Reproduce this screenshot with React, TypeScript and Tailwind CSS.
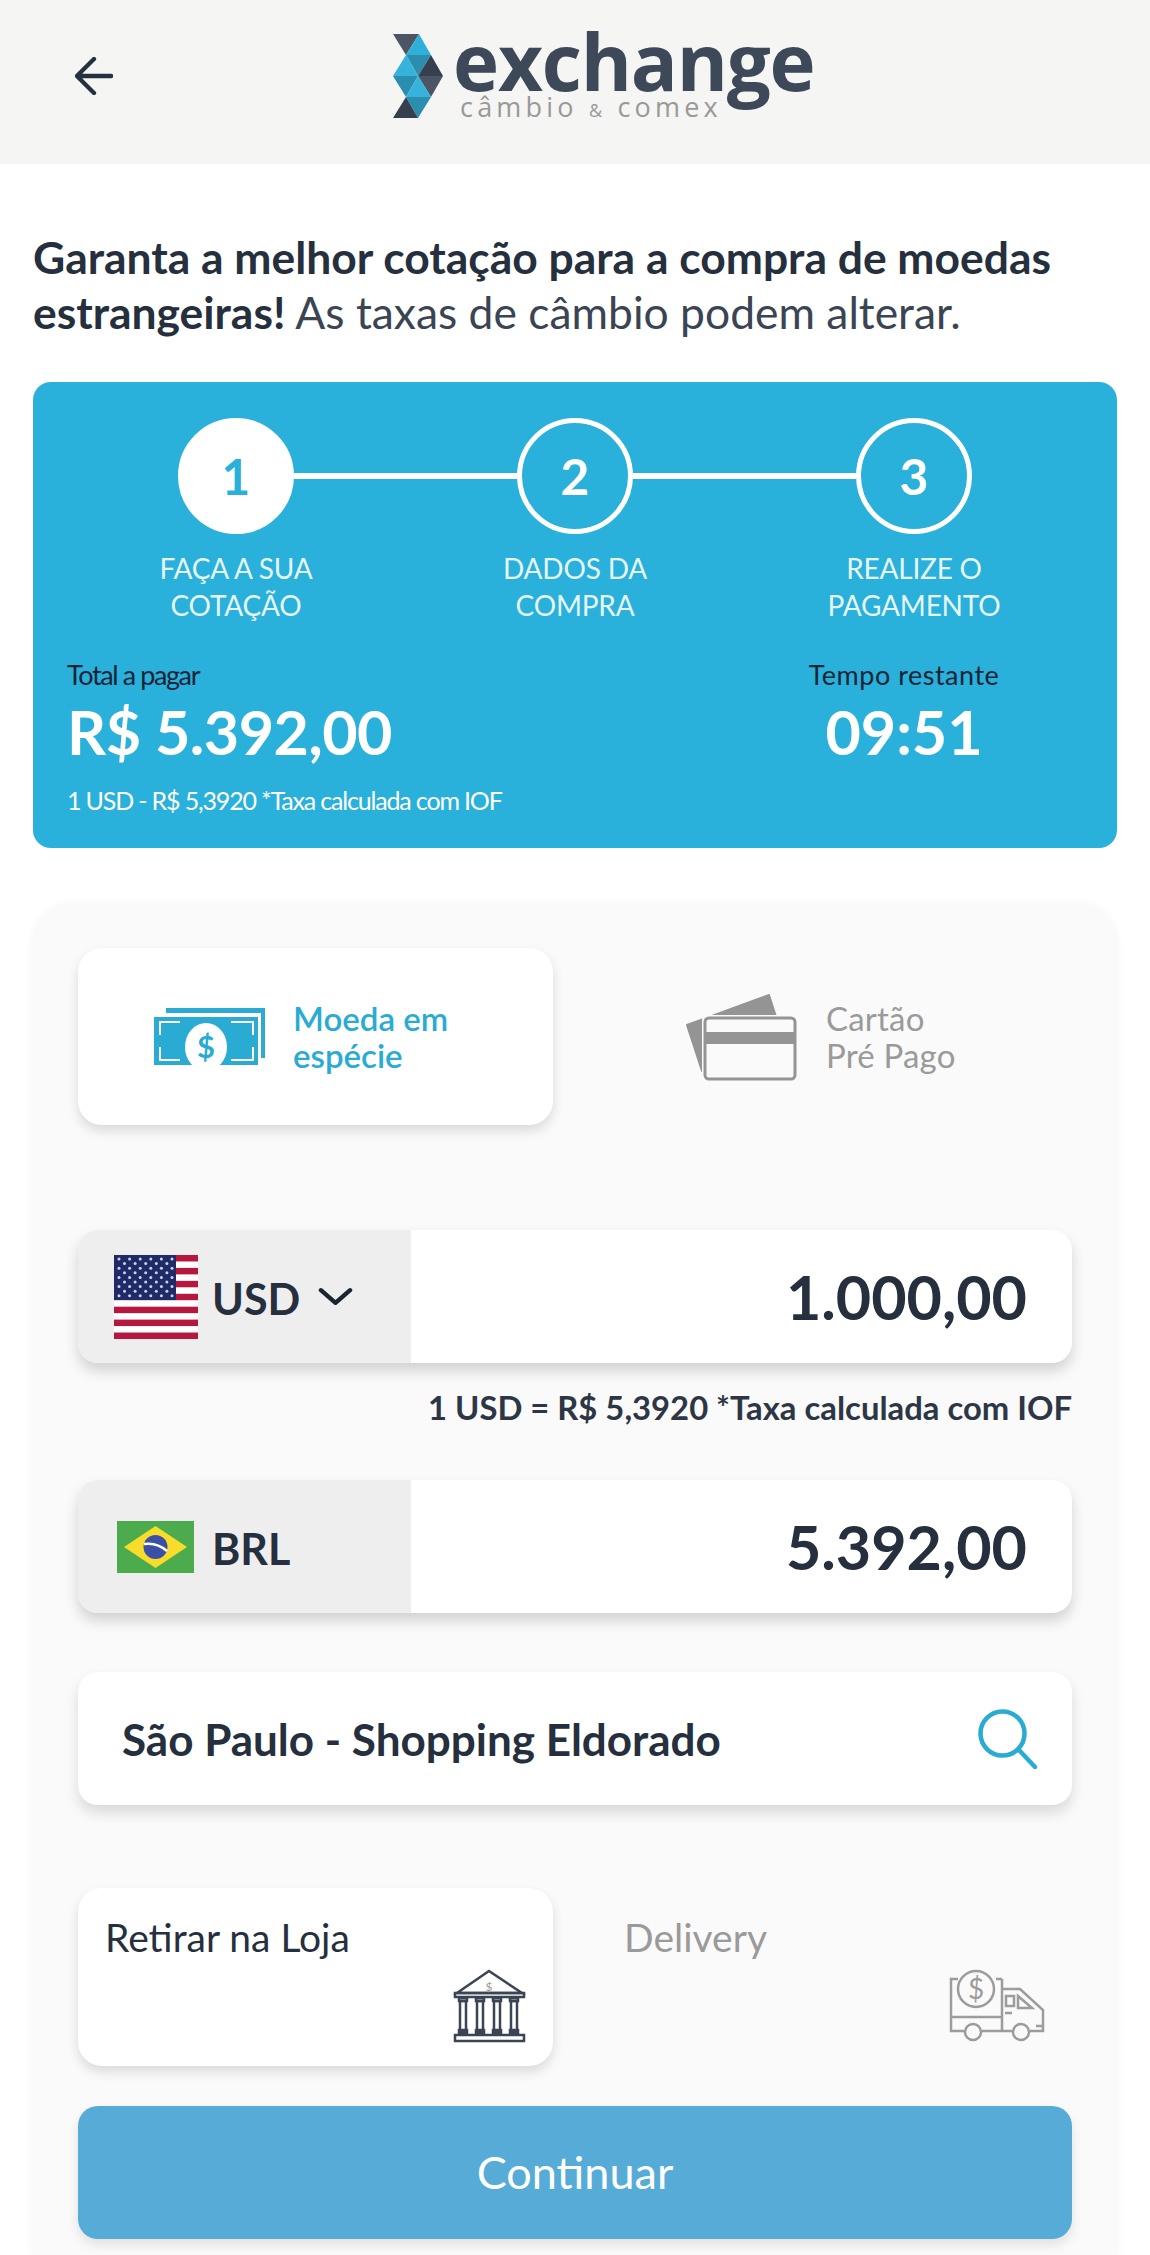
const starRows = [0, 1, 2, 3, 4, 5, 6, 7, 8];

const UsaFlag = () => (
  <svg viewBox="0 0 84 84" className="w-[84px] h-[84px] shrink-0">
    <rect width="84" height="84" fill="#ffffff" />
    {[0, 2, 4, 6, 8, 10, 12].map((i) => (
      <rect key={i} x="0" y={i * 6.46} width="84" height="6.46" fill="#b5173f" />
    ))}
    <rect width="62" height="45" fill="#1f2a66" />
    {starRows.map((r) =>
      (r % 2 === 0 ? [0, 1, 2, 3, 4, 5] : [0, 1, 2, 3, 4]).map((c) => (
        <circle key={`${r}-${c}`} cx={(r % 2 === 0 ? 5 : 10.5) + c * 10.6} cy={4 + r * 4.6} r="1.5" fill="#c9d3ee" />
      ))
    )}
  </svg>
);

const BrazilFlag = () => (
  <svg viewBox="0 0 77 52" className="w-[77px] h-[52px] shrink-0 mr-[4px]">
    <rect width="77" height="52" fill="#4bab4d" />
    <polygon points="38.5,5 70,26 38.5,47 7,26" fill="#f7dc2b" />
    <circle cx="38.5" cy="26" r="12" fill="#3a4fa6" />
    <path d="M27 23 Q40 21 50 30" fill="none" stroke="#ffffff" strokeWidth="2.5" />
  </svg>
);

const Logo = () => (
  <div className="flex items-start">
    <svg viewBox="0 0 50 84" className="w-[50px] h-[84px] shrink-0 mt-[34px]">
      <polygon points="0,0 26,0 13,21" fill="#4b5563" />
      <polygon points="26,0 38,21 13,21" fill="#2fb0d8" />
      <polygon points="13,21 38,21 25,42" fill="#2b8eaf" />
      <polygon points="13,21 25,42 0,42" fill="#35b3da" />
      <polygon points="38,21 50,42 25,42" fill="#353f4f" />
      <polygon points="0,42 25,42 13,63" fill="#2b8eaf" />
      <polygon points="25,42 50,42 38,63" fill="#4b5563" />
      <polygon points="25,42 38,63 13,63" fill="#35b3da" />
      <polygon points="13,63 38,63 25,84" fill="#2b8eaf" />
      <polygon points="13,63 25,84 0,84" fill="#353f4f" />
    </svg>
    <div className="ml-[10px] flex flex-col w-[360px] pt-[31px]">
      <span className="font-['Open_Sans',sans-serif] font-bold text-[#3d4858] text-[78px] leading-[60px] tracking-[-1.2px] whitespace-nowrap">
        exchange
      </span>
      <span className="font-['Open_Sans',sans-serif] text-[#999999] text-[27px] leading-[26px] tracking-[4.2px] ml-[7px] mt-[3px] whitespace-nowrap">
        câmbio <span className="text-[18px]">&amp;</span> comex
      </span>
    </div>
  </div>
);

const MoneyIcon = () => (
  <svg viewBox="153 1005 113 66" className="w-[113px] h-[66px] shrink-0 mt-[3px]">
    <path d="M166 1008H265V1058H261V1013H166Z" fill="#29abd4" />
    <rect x="154" y="1017" width="104" height="48" fill="#29abd4" />
    <ellipse cx="206" cy="1047" rx="21" ry="24" fill="#ffffff" />
    <path d="M180 1022H160V1035M231 1022H253V1035M160 1047V1060H180M253 1047V1060H231" fill="none" stroke="#ffffff" strokeWidth="2" />
    <text x="206" y="1058" textAnchor="middle" fontSize="31" fontWeight="700" fill="#29abd4" fontFamily="Lato, sans-serif">$</text>
  </svg>
);

const CardIcon = () => (
  <svg viewBox="685 993 113 88" className="w-[113px] h-[88px] shrink-0">
    <path d="M688 1025L770 995L778 1020L708 1040L703 1071Z" fill="#949494" stroke="#949494" strokeLinejoin="round" strokeWidth="2" />
    <rect x="703" y="1015" width="95" height="66" rx="5" fill="#fafafa" />
    <rect x="706" y="1018" width="90" height="61" rx="4" fill="#fafafa" stroke="#949494" strokeWidth="3" />
    <rect x="706" y="1032" width="90" height="12" fill="#949494" />
  </svg>
);

const SearchIcon = () => (
  <svg viewBox="0 0 60 60" className="w-[60px] h-[60px] shrink-0" fill="none" stroke="#29abd4" strokeWidth="4.5" strokeLinecap="round">
    <circle cx="24.5" cy="24.5" r="22" />
    <path d="M41 41L57 58" />
  </svg>
);

const BankIcon = () => (
  <svg viewBox="450 1962 80 78" className="w-[80px] h-[78px] shrink-0" fill="none" stroke="#3a4453" strokeWidth="2.5">
    <path d="M489 1967L457 1989H522Z" />
    <rect x="455" y="1989" width="69" height="4" />
    {[463, 480, 497, 514].map((x) => (
      <g key={x}>
        <rect x={x - 4} y="1994" width="8" height="3" />
        <rect x={x - 3} y="1997" width="6" height="30" />
        <rect x={x - 4} y="2026" width="8" height="3" />
      </g>
    ))}
    <rect x="455" y="2031" width="69" height="6" />
    <text x="489" y="1987" textAnchor="middle" fontSize="12" fill="#9a9a9a" stroke="none" fontFamily="Lato, sans-serif">$</text>
  </svg>
);

const TruckIcon = () => (
  <svg viewBox="946 1962 100 78" className="w-[100px] h-[78px] shrink-0" fill="none" stroke="#9c9c9c" strokeWidth="2.5">
    <path d="M958 1975H951V2027H964M982 2027H1012M1002 1975H996M1002 1975V2027" />
    <circle cx="976" cy="1985" r="18" />
    <path d="M951 2013H1002" />
    <path d="M1002 1985H1020L1043 2006V2027H1030" />
    <path d="M1006 1992H1014V2002H1006ZM1018 1992L1032 2004H1018Z" />
    <path d="M1005 2009H1012M1036 2022H1043" />
    <circle cx="973" cy="2028" r="8" />
    <circle cx="1021" cy="2028" r="8" />
    <text x="976" y="1995" textAnchor="middle" fontSize="28" fill="#9c9c9c" stroke="none" fontFamily="Lato, sans-serif">$</text>
  </svg>
);

const Step = ({ n, active }: { n: number; active?: boolean }) => (
  <div
    className={`w-[116px] h-[116px] rounded-full border-[5px] border-white flex items-center justify-center shrink-0 text-[50px] font-bold ${
      active ? 'bg-white text-[#29b0db]' : 'text-white'
    }`}
  >
    {n}
  </div>
);

const CurrencyRow = ({ flag, code, value, chevron }: { flag: React.ReactNode; code: string; value: string; chevron?: boolean }) => (
  <div className="flex h-[133px] rounded-[20px] bg-white shadow-[0_8px_14px_rgba(0,0,0,0.16)] overflow-hidden">
    <div className="w-[333px] bg-[#eeeeee] flex items-center">
      <div className="w-[135px] flex justify-end pr-[15px]">{flag}</div>
      <span className="text-[43px] font-bold text-[#252f3d] leading-none mt-[4px] -ml-[1px]">{code}</span>
      {chevron && (
        <svg viewBox="0 0 36 20" className="w-[35px] h-[20px] ml-[18px]" fill="none" stroke="#1b2431" strokeWidth="4.5" strokeLinecap="round" strokeLinejoin="round">
          <path d="M3 3L18 16L33 3" />
        </svg>
      )}
    </div>
    <div className="flex-1 flex items-center justify-end pr-[45px] text-[61px] font-bold text-[#252f3d] leading-none">
      {value}
    </div>
  </div>
);

export default function App() {
  return (
    <div className="w-[1150px] h-[2255px] overflow-hidden bg-white font-['Lato',sans-serif] text-[#2d3645]">
      <header className="h-[164px] bg-[#f5f5f3] flex items-start">
        <svg viewBox="0 0 40 40" className="w-[38px] h-[38px] ml-[75px] mt-[57px] shrink-0" fill="none" stroke="#253040" strokeWidth="4.5" strokeLinecap="round" strokeLinejoin="round">
          <path d="M38 20H3M20 2L2 20L20 38" />
        </svg>
        <div className="ml-[280px]">
          <Logo />
        </div>
      </header>

      <p className="mx-[33px] mt-[65px] text-[44.4px] leading-[55px] text-[#3a4453] whitespace-nowrap">
        <strong className="font-bold text-[#252f3d]">Garanta a melhor cotação para a compra de moedas</strong>
        <br />
        <strong className="font-bold text-[#252f3d]">estrangeiras!</strong> As taxas de câmbio podem alterar.
      </p>

      <section className="mx-[33px] mt-[43px] h-[466px] rounded-[18px] bg-[#29b0db] pt-[36px]">
        <div className="flex items-center px-[145px]">
          <Step n={1} active />
          <div className="flex-1 h-[6px] bg-white" />
          <Step n={2} />
          <div className="flex-1 h-[6px] bg-white" />
          <Step n={3} />
        </div>
        <div className="grid grid-cols-3 px-[33.5px] mt-[16px] text-center text-[28px] leading-[37px] text-[#e6f6fb] tracking-[-0.2px]">
          <span>FAÇA A SUA<br />COTAÇÃO</span>
          <span>DADOS DA<br />COMPRA</span>
          <span>REALIZE O<br />PAGAMENTO</span>
        </div>
        <div className="flex justify-between pl-[34px] pr-[92px] mt-[33px]">
          <div>
            <div className="text-[27px] leading-[36px] text-[#152536] tracking-[-1.4px]">Total a pagar</div>
            <div className="text-[61px] leading-[70px] mt-[4px] font-bold text-white tracking-[-0.5px]">R$ 5.392,00</div>
            <div className="text-[25px] leading-[30px] mt-[18px] text-white tracking-[-1.17px] whitespace-nowrap">
              1 USD - R$ 5,3920 *Taxa calculada com IOF
            </div>
          </div>
          <div className="w-[240px] text-center -translate-x-[1px]">
            <div className="text-[27px] leading-[36px] text-[#152536] tracking-[0.5px] whitespace-nowrap">Tempo restante</div>
            <div className="text-[61px] leading-[70px] mt-[4px] font-bold text-white">09:51</div>
          </div>
        </div>
      </section>

      <section className="mx-[33px] mt-[56px] rounded-t-[40px] bg-[#fafafa] px-[45px] pt-[44px] pb-[17px] shadow-[0_0_10px_rgba(0,0,0,0.05)]">
        <div className="grid grid-cols-2">
          <div className="w-[475px] h-[177px] rounded-[24px] bg-white shadow-[0_6px_12px_rgba(0,0,0,0.13)] flex items-center pl-[75px] gap-[27px]">
            <MoneyIcon />
            <span className="text-[33px] leading-[37px] font-semibold text-[#29abd4]">Moeda em<br />espécie</span>
          </div>
          <div className="h-[177px] flex items-center pl-[109px] gap-[29px]">
            <CardIcon />
            <span className="text-[33px] leading-[37px] text-[#9a9a9a] tracking-[0.2px]">Cartão<br />Pré Pago</span>
          </div>
        </div>

        <div className="mt-[105px]">
          <CurrencyRow flag={<UsaFlag />} code="USD" value="1.000,00" chevron />
        </div>
        <div className="h-[117px] pt-[27px] text-right text-[32.8px] leading-[36px] font-bold text-[#2d3645]">
          1 USD = R$ 5,3920 *Taxa calculada com IOF
        </div>
        <CurrencyRow flag={<BrazilFlag />} code="BRL" value="5.392,00" />

        <div className="mt-[59px] h-[133px] rounded-[20px] bg-white shadow-[0_8px_14px_rgba(0,0,0,0.13)] flex items-center justify-between pl-[44px] pr-[34px]">
          <span className="text-[44px] font-bold text-[#252f3d] leading-none">São Paulo - Shopping Eldorado</span>
          <SearchIcon />
        </div>

        <div className="grid grid-cols-2 mt-[83px]">
          <div className="w-[475px] h-[178px] rounded-[24px] bg-white shadow-[0_6px_12px_rgba(0,0,0,0.13)] pl-[27px] pr-[23px] pt-[26px]">
            <div className="text-[39px] leading-[46px] text-[#252f3d]">Retirar na Loja</div>
            <div className="flex justify-end mt-[6px]"><BankIcon /></div>
          </div>
          <div className="h-[178px] pl-[49px] pr-[26px] pt-[26px]">
            <div className="text-[39px] leading-[46px] text-[#9a9a9a]">Delivery</div>
            <div className="flex justify-end mt-[6px]"><TruckIcon /></div>
          </div>
        </div>

        <button className="mt-[40px] w-full h-[133px] rounded-[20px] bg-[#56acd6] text-white text-[45px] shadow-[0_6px_12px_rgba(0,0,0,0.1)]">
          Continuar
        </button>
      </section>
    </div>
  );
}
